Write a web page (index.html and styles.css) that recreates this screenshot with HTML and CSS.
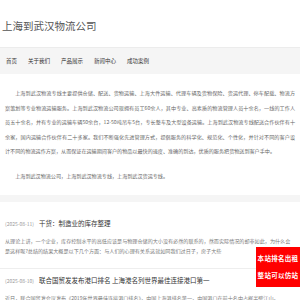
FILE: index.html
```html
<!DOCTYPE html>
<html lang="zh-CN">
<head>
    <meta charset="UTF-8">
    <meta name="viewport" content="width=device-width, initial-scale=1.0">
    <title>上海到武汉物流公司</title>
    <link rel="stylesheet" href="styles.css">
</head>
<body>

    <div class="header">
        <h1 class="logo">上海到武汉物流公司</h1>
    </div>

    <div class="nav">
        <a href="#">首页</a>
        <a href="#">关于我们</a>
        <a href="#">产品展示</a>
        <a href="#">新闻中心</a>
        <a href="#">成功案例</a>
    </div>

    <div class="about">
        <p>上海到武汉物流专线主要提供仓储、配送、货物运输、上海大件运输、代理车辆及货物保险、货运代理、停车配载、物流方案策划等专业物流运输服务。上海到武汉物流公司现拥有员工60余人，其中专业、高素质的物流管理人员十余名，一线的工作人员五十余名，并有专业的运输车辆50余台，12-50吨吊车5台，专长整车及大型设备运输。上海到武汉物流专线配送合作伙伴有十余家，国内运输合作伙伴有二十多家。我们不断强化先进管理方式，提倡服务的科学化、规范化、个性化，并针对不同的客户设计不同的物流运作方案，从而保证在运输期间客户的物品以最快的速度、准确的到达，优质的服务把货物送到客户手中。</p>
        <p>上海到武汉物流公司，上海到武汉物流专线，上海到武汉货运专线。</p>
    </div>

    <div class="news">
        <div class="news-item">
            <div class="news-head">
                <span class="date">(2025-08-11)</span>
                <a href="#" class="news-title">干货：制造业的库存整理</a>
            </div>
            <p class="news-desc">从理论上讲，一个企业，库存控制水平的高低应该是与物理仓储的大小没有必然的联系的，然而实际情况的却非如此，为什么会是这样呢?总结的结果大概是以下几个方面：与人们的心理有关系这就如同我们过日子，房子大些</p>
        </div>
        <div class="news-item">
            <div class="news-head">
                <span class="date">(2025-08-10)</span>
                <a href="#" class="news-title">联合国贸发发布港口排名 上海港名列世界最佳连接港口第一</a>
            </div>
            <p class="news-desc">近日，联合国贸发会议发布《2019年世界最佳连接港口排名》，中国上海港排名第一，中国港口在前十名中占据半壁江山。</p>
        </div>
    </div>

    <div class="float-ad">本站排名出租<br>整站可以仿站</div>

</body>
</html>
```

FILE: styles.css
```css
body {
    margin: 0;
    background-color: #f5f5f5;
    font-family: "Noto Sans CJK SC", "Noto Sans", sans-serif;
    color: #555;
}
a {
    text-decoration: none;
}
.header {
    background: #ffffff;
    height: 47px;
    border-bottom: 1px solid #ececec;
    display: flex;
    align-items: center;
    padding-left: 2px;
}
.logo {
    margin: 0;
    font-size: 10.5px;
    font-weight: normal;
    color: #555;
    padding-top: 3px;
}
.nav {
    height: 26px;
    display: flex;
    align-items: center;
    gap: 11px;
    padding-left: 6px;
}
.nav a {
    font-size: 5.5px;
    color: #333;
}
.about {
    background: #ffffff;
    padding: 12px 5px 12px;
    margin-bottom: 7px;
}
.about p {
    margin: 0 0 10px;
    font-size: 5.1px;
    line-height: 14.5px;
    text-indent: 2em;
    text-align: justify;
    color: #666;
}
.about p:last-child {
    margin-bottom: 0;
}
.news {
    background: #ffffff;
    padding-top: 10px;
}
.news-item {
    padding: 3px 5px 12px;
    border-bottom: 1px solid #eeeeee;
}
.news-head {
    display: flex;
    align-items: center;
    height: 16px;
}
.date {
    font-size: 5px;
    color: #999;
    margin-right: 5px;
}
.news-title {
    font-size: 6.5px;
    color: #333;
}
.news-desc {
    margin: 5px 0 0;
    font-size: 5.1px;
    line-height: 10px;
    color: #777;
}
.float-ad {
    position: fixed;
    right: 0;
    top: 247px;
    width: 44px;
    height: 40px;
    box-sizing: border-box;
    padding-top: 3px;
    background-color: #ff0000;
    color: #ffffff;
    font-weight: bold;
    font-size: 6.5px;
    line-height: 17px;
    letter-spacing: 0.3px;
    text-align: center;
}
```
